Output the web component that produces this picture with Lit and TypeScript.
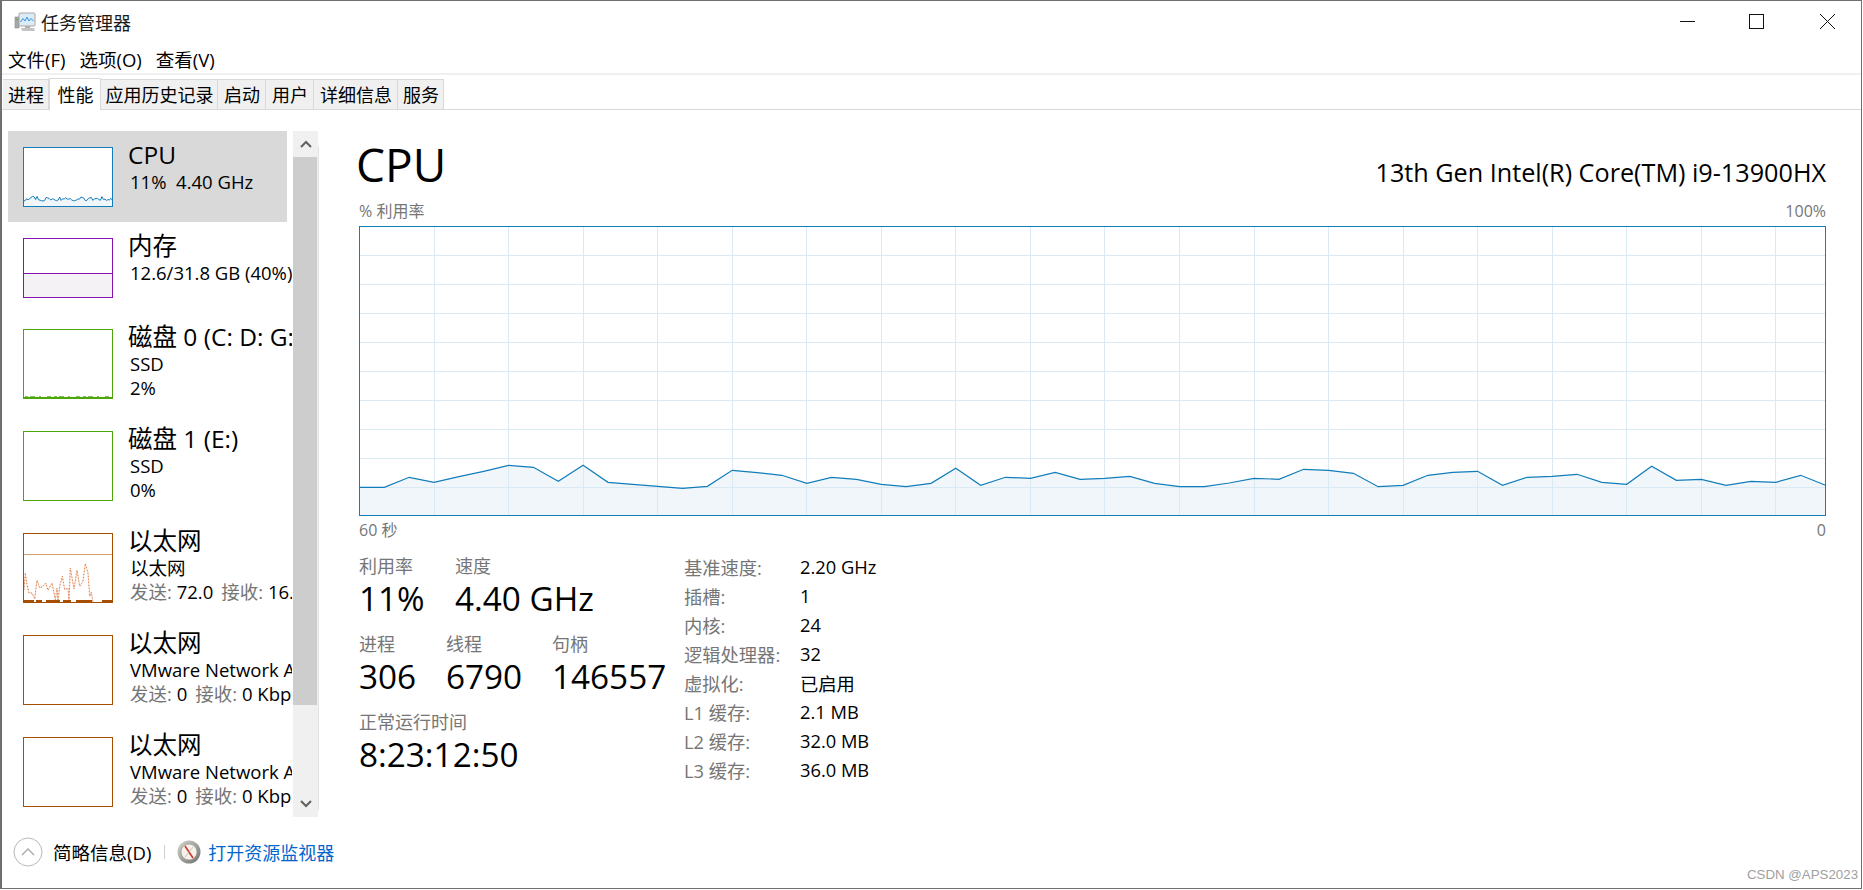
import { LitElement, html, css, svg } from "lit";
import { customElement } from "lit/decorators.js";

const CPU_Y = [487.3,487.3,477.3,482.3,476.7,471.3,465.3,467.3,481.3,465.3,482.3,484.3,486.3,488.3,486.3,470.3,472.7,475.3,483.3,477.3,479.3,484.3,486.7,483.3,468.3,485.3,477.3,478.3,472.3,479.3,478.3,476.3,483.3,486.7,486.7,483,478.3,479.3,469.3,470.3,473.3,486.7,485.3,475.3,472.3,471.3,485.3,477.3,476.3,474.3,482.3,484.3,466.3,480.3,479.3,485.3,481.3,482.3,475.3,485.3];
const ETH = [[13,180],[17,130],[22,165],[28,190],[37,190],[45,208],[52,152],[60,175],[70,170],[78,160],[85,182],[97,160],[107,210],[112,175],[115,215],[120,170],[128,140],[135,180],[145,175],[148,218],[152,115],[163,178],[172,122],[180,170],[190,155],[197,102],[205,130],[210,200],[215,188],[220,218]];

const W = 1466, H = 289;
const xAt = (i: number, w: number) => (i * w) / 59;

function mainChart() {
  const pts = CPU_Y.map((y, i) => `${(xAt(i, W) + 0.5).toFixed(1)},${(y - 226).toFixed(1)}`);
  const hl = Array.from({ length: 9 }, (_, i) => 29 * (i + 1) + 0.5);
  const vl = Array.from({ length: 19 }, (_, i) => Math.round(74.7 + 74.53 * i) + 0.5);
  return html`<svg class="big" width="1467" height="290" viewBox="0 0 1467 290">
    <polygon points="0.5,${H} ${pts.join(" ")} ${W},${H}" fill="#f1f6fa"></polygon>
    ${hl.map((y) => svg`<line x1="0" x2="1467" y1=${y} y2=${y} stroke="#d9eaf4"></line>`)}
    ${vl.map((x) => svg`<line x1=${x} x2=${x} y1="0" y2="290" stroke="#d9eaf4"></line>`)}
    <polyline points=${pts.join(" ")} fill="none" stroke="#117dbb" stroke-width="1.2"></polyline>
    <rect x="0.5" y="0.5" width="1466" height="289" fill="none" stroke="#117dbb"></rect>
  </svg>`;
}

function cpuMini() {
  const pts = CPU_Y.map((y, i) => `${(0.5 + xAt(i, 89)).toFixed(1)},${(59.5 - (515.6 - y) * 0.2).toFixed(1)}`);
  return svg`<polygon points="0.5,59.5 ${pts.join(" ")} 89.5,59.5" fill="#f1f6fa"></polygon>
    <polyline points=${pts.join(" ")} fill="none" stroke="#117dbb"></polyline>`;
}

function memMini() {
  return svg`<rect x="0.5" y="36" width="89" height="23.5" fill="#f4f2f4"></rect>
    <line x1="0" x2="90" y1="35.5" y2="35.5" stroke="#8b12ae"></line>`;
}

function diskMini() {
  return svg`<line x1="1" x2="89" y1="68.5" y2="68.5" stroke="#4da60c"></line>
    <line x1="2" x2="88" y1="67.5" y2="67.5" stroke="#4da60c" stroke-opacity=".7" stroke-dasharray="3 2 5 4 2 6 4 3"></line>`;
}

function ethMini() {
  const pts = ETH.map(([x, y]) => `${((x - 10) / 3).toFixed(1)},${((y - 10) / 3).toFixed(1)}`).join(" ");
  return svg`<line x1="0" x2="90" y1="21.5" y2="21.5" stroke="#d9a070"></line>
    <polyline points=${pts} fill="none" stroke="#f3d5c2" stroke-width="1"></polyline>
    <polyline points=${pts} fill="none" stroke="#e0703a" stroke-dasharray="1 2"></polyline>
    <line x1="1" x2="89" y1="68" y2="68" stroke="#a74f01" stroke-width="2" stroke-dasharray="10 2 6 4 14 3 8 5 16 10"></line>`;
}

interface Item { title: string; lines: unknown[]; color: string; h: number; mini?: () => unknown; sel?: boolean; tall?: boolean }

const send = (a: string, b: string) => html`<span class="g">发送:</span> ${a}<span class="g rx">接收:</span> ${b}`;

const ITEMS: Item[] = [
  { title: "CPU", lines: [html`11%&nbsp; 4.40 GHz`], color: "#117dbb", h: 60, mini: cpuMini, sel: true },
  { title: "内存", lines: ["12.6/31.8 GB (40%)"], color: "#8b12ae", h: 60, mini: memMini },
  { title: "磁盘 0 (C: D: G:)", lines: ["SSD", "2%"], color: "#4da60c", h: 70, mini: diskMini, tall: true },
  { title: "磁盘 1 (E:)", lines: ["SSD", "0%"], color: "#4da60c", h: 70, tall: true },
  { title: "以太网", lines: ["以太网", send("72.0", "16.0 Kbps")], color: "#a74f01", h: 70, mini: ethMini, tall: true },
  { title: "以太网", lines: ["VMware Network Adapter", send("0", "0 Kbps")], color: "#a74f01", h: 70, tall: true },
  { title: "以太网", lines: ["VMware Network Adapter", send("0", "0 Kbps")], color: "#a74f01", h: 70, tall: true },
];

const TABS: [string, number, boolean?][] = [
  ["进程", 46], ["性能", 52, true], ["应用历史记录", 117], ["启动", 48], ["用户", 48], ["详细信息", 84], ["服务", 46],
];

const SPECS: [string, string][] = [
  ["基准速度:", "2.20 GHz"], ["插槽:", "1"], ["内核:", "24"], ["逻辑处理器:", "32"],
  ["虚拟化:", "已启用"], ["L1 缓存:", "2.1 MB"], ["L2 缓存:", "32.0 MB"], ["L3 缓存:", "36.0 MB"],
];

@customElement("app-root")
export class AppRoot extends LitElement {
  static styles = css`
    :host {
      display: block;
      width: 1863px;
      height: 890px;
      background: #fff;
      font-family: "Open Sans", "Noto Sans CJK SC", sans-serif;
      font-size: 18px;
      color: #000;
      overflow: hidden;
      position: relative;
    }
    * { box-sizing: border-box; }
    .window {
      width: 1862px;
      height: 889px;
      border: 1px solid #6f6f6f;
      border-left-width: 2px;
      display: flex;
      flex-direction: column;
    }
    .titlebar {
      height: 46px;
      flex: none;
      display: flex;
      align-items: center;
      padding-left: 12px;
      padding-bottom: 4px;
      font-size: 18px;
      color: #1a1a1a;
    }
    .titlebar .app { margin-right: 5px; }
    .titlebar .ctrls { margin-left: auto; display: block; }
    .titlebar .pad { width: 25px; }
    .menu {
      height: 26px;
      flex: none;
      display: flex;
      align-items: center;
      padding-left: 6px;
      padding-bottom: 2px;
      gap: 14px;
      font-size: 18.5px;
    }
    .menusep { height: 2px; background: #f0f0f0; flex: none; }
    .tabs {
      height: 35px;
      flex: none;
      display: flex;
      align-items: flex-end;
      padding-left: 1px;
      border-bottom: 1px solid #d9d9d9;
    }
    .tab {
      height: 30px;
      background: #f0f0f0;
      border: 1px solid #d9d9d9;
      border-bottom: none;
      border-left: none;
      display: flex;
      align-items: center;
      justify-content: center;
      font-size: 18px;
      white-space: nowrap;
      padding: 0 0 2px 1px;
    }
    .tab.sel {
      height: 32px;
      background: #fff;
      border-left: 1px solid #d9d9d9;
      margin-bottom: -1px;
    }
    .body { flex: none; height: 707px; display: flex; }
    .side { width: 317px; flex: none; display: flex; padding: 21px 0 0 6px; height: 707px; }
    .list { width: 284px; margin-right: 1px; height: 686px; overflow: hidden; flex: none; }
    .item {
      width: 279px;
      display: flex;
      gap: 15px;
      padding: 16px 0 0 15px;
      height: 102px;
    }
    .item.short { height: 91px; }
    .item.sel { background: #d9d9d9; }
    .mini { display: block; flex: none; background: #fff; }
    .txt { margin-top: -7px; white-space: nowrap; }
    .ttl { font-size: 24.5px; line-height: 30px; }
    .sub { font-size: 18.5px; line-height: 24px; padding-left: 2px; }
    .g { color: #767676; }
    .rx { margin-left: 8px; }
    .scroll {
      width: 25px;
      height: 686px;
      flex: none;
      background: #f0f0f0;
      display: flex;
      flex-direction: column;
    }
    .arrow { height: 26px; flex: none; display: flex; align-items: center; justify-content: center; }
    .thumb { height: 548px; width: 24px; background: #cdcdcd; flex: none; }
    .arrow.down { margin-top: auto; }
    .rule { width: 1px; background: #e2e2e2; margin: 15px 0 7px; flex: none; }
    .main { flex: none; width: 1467px; margin-left: 40px; }
    .head { display: flex; justify-content: space-between; align-items: baseline; padding-top: 29px; height: 80px; }
    .head .big-t { font-size: 46px; line-height: 50px; margin-left: -3px; }
    .head .model { font-size: 25.2px; }
    .axis { display: flex; justify-content: space-between; color: #767676; font-size: 16px; line-height: 24px; }
    .axis.top { margin-top: 9px; margin-bottom: 3px; }
    .big { display: block; }
    .axis.bot { margin-top: 2px; }
    .stats { display: flex; margin-top: 12px; }
    .left { width: 325px; flex: none; display: flex; flex-direction: column; gap: 14px; }
    .row { display: flex; }
    .lab { color: #767676; font-size: 18px; line-height: 24px; }
    .val { font-size: 33.3px; line-height: 40px; white-space: nowrap; }
    .spec { display: grid; grid-template-columns: 116px auto; grid-auto-rows: 29px; align-items: center; font-size: 18.3px; margin-top: -2px; height: 232px; }
    .footer {
      flex: 1;
      display: flex;
      align-items: center;
      padding-left: 11px;
      font-size: 18px;
      padding-bottom: 1px;
    }
    .footer .lbl { margin-left: 10px; font-size: 18.5px; }
    .footer .bar { width: 1px; height: 14px; background: #d0d0d0; margin: 0 12px 0 13px; }
    .footer .link { color: #0066cc; margin-left: 7px; }
    .wm {
      position: absolute;
      left: 1747px;
      top: 867px;
      font-family: "Liberation Sans", sans-serif;
      font-size: 13.3px;
      line-height: 16px;
      color: #a0a0a0;
    }
  `;

  renderItem(it: Item) {
    return html`<div class="item ${it.sel ? "sel" : ""} ${it.tall ? "" : "short"}">
      <svg class="mini" width="90" height=${it.h} viewBox="0 0 90 ${it.h}">
        ${it.mini ? it.mini() : ""}
        <rect x="0.5" y="0.5" width="89" height=${it.h - 1} fill="none" stroke=${it.color}></rect>
      </svg>
      <div class="txt">
        <div class="ttl">${it.title}</div>
        ${it.lines.map((l) => html`<div class="sub">${l}</div>`)}
      </div>
    </div>`;
  }

  stat(l: string, v: string, w?: number) {
    return html`<div style=${w ? `width:${w}px` : ""}><div class="lab">${l}</div><div class="val">${v}</div></div>`;
  }

  render() {
    return html`<div class="window">
      <div class="titlebar">
        <svg class="app" width="22" height="22" viewBox="0 0 22 22">
          <rect x="1" y="6" width="4" height="11" fill="#a8a8a8" stroke="#8a8a8a" stroke-width=".6"></rect>
          <rect x="1.8" y="8" width="2.4" height="1.2" fill="#6aa84f"></rect>
          <rect x="5" y="2" width="16" height="13" rx="1" fill="#e4e8ec" stroke="#a6a6a6"></rect>
          <rect x="6.5" y="3.5" width="13" height="10" fill="#d8ecfa"></rect>
          <polyline points="6.5,11 9,7.5 11,10 13,6 15,10 17,7.5 19.5,10" fill="none" stroke="#3b93d3" stroke-width="1"></polyline>
          <path d="M7 17h13l1 3H8z" fill="#c4c4c4"></path>
          <path d="M11 15h5v2h-5z" fill="#b0b0b0"></path>
        </svg>
        <span>任务管理器</span>
        <svg class="ctrls" width="156" height="24" viewBox="0 0 156 24">
          <line x1="0" x2="15" y1="11.5" y2="11.5" stroke="#111"></line>
          <rect x="69.5" y="4.5" width="14" height="14" fill="none" stroke="#111"></rect>
          <path d="M140 4l15 15M155 4l-15 15" stroke="#111" fill="none"></path>
        </svg>
        <span class="pad"></span>
      </div>
      <div class="menu"><span>文件(F)</span><span>选项(O)</span><span>查看(V)</span></div>
      <div class="menusep"></div>
      <div class="tabs">
        ${TABS.map(([t, w, s]) => html`<div class="tab ${s ? "sel" : ""}" style="width:${w}px">${t}</div>`)}
      </div>
      <div class="body">
        <div class="side">
          <div class="list">${ITEMS.map((i) => this.renderItem(i))}</div>
          <div class="scroll">
            <div class="arrow"><svg width="12" height="8" viewBox="0 0 12 8"><path d="M1 7l5-5 5 5" fill="none" stroke="#606060" stroke-width="2"></path></svg></div>
            <div class="thumb"></div>
            <div class="arrow down"><svg width="12" height="8" viewBox="0 0 12 8"><path d="M1 1l5 5 5-5" fill="none" stroke="#606060" stroke-width="2"></path></svg></div>
          </div>
          <div class="rule"></div>
        </div>
        <div class="main">
          <div class="head"><span class="big-t">CPU</span><span class="model">13th Gen Intel(R) Core(TM) i9-13900HX</span></div>
          <div class="axis top"><span>% 利用率</span><span>100%</span></div>
          ${mainChart()}
          <div class="axis bot"><span>60 秒</span><span>0</span></div>
          <div class="stats">
            <div class="left">
              <div class="row">${this.stat("利用率", "11%", 96)}${this.stat("速度", "4.40 GHz")}</div>
              <div class="row">${this.stat("进程", "306", 87)}${this.stat("线程", "6790", 106)}${this.stat("句柄", "146557")}</div>
              <div class="row">${this.stat("正常运行时间", "8:23:12:50")}</div>
            </div>
            <div class="spec">
              ${SPECS.map(([k, v]) => html`<span class="g">${k}</span><span>${v}</span>`)}
            </div>
          </div>
        </div>
      </div>
      <div class="footer">
        <svg width="30" height="30" viewBox="0 0 30 30">
          <circle cx="15" cy="15" r="14" fill="#fff" stroke="#b8b8b8"></circle>
          <path d="M9 18l6-6 6 6" fill="none" stroke="#a8a8a8" stroke-width="1.4"></path>
        </svg>
        <span class="lbl">简略信息(D)</span>
        <span class="bar"></span>
        <svg width="24" height="24" viewBox="0 0 24 24">
          <defs><linearGradient id="rim" x1="0" y1="0" x2="1" y2="1"><stop offset="0" stop-color="#d8d8d0"></stop><stop offset="1" stop-color="#6e6e6e"></stop></linearGradient></defs>
          <circle cx="12" cy="12" r="11.5" fill="url(#rim)"></circle>
          <circle cx="12" cy="12" r="8" fill="#f6f2ea" stroke="#8a8a8a" stroke-width=".6"></circle>
          <path d="M8 6l8 12" stroke="#d0342c" stroke-width="1.6"></path>
          <path d="M16 7l-8 10" stroke="#b9b4a8" stroke-width=".8"></path>
        </svg>
        <span class="link">打开资源监视器</span>
      </div>
    </div>
    <div class="wm">CSDN @APS2023</div>`;
  }
}
